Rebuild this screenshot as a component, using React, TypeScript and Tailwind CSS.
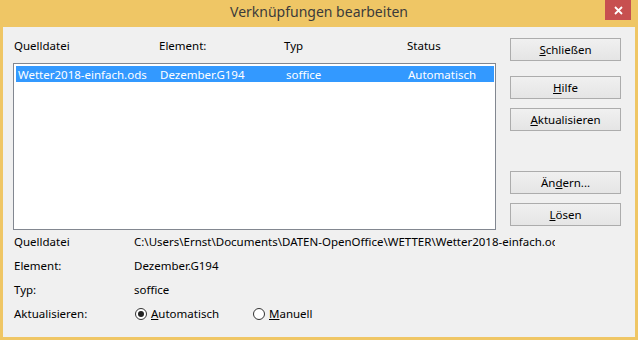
import React from 'react';

const font = { fontFamily: '"Noto Sans", "Open Sans", sans-serif' };

interface BtnProps {
    children: React.ReactNode;
    className?: string;
}

// Win8-style push button
const Btn: React.FC<BtnProps> = ({ children, className = '' }) => (
    <div className={`h-[23px] w-[111px] border border-[#acacac] bg-gradient-to-b from-[#f0f0f0] to-[#e5e5e5] flex items-center justify-center text-[11.5px] text-black ${className}`}>
        {children}
    </div>
);

const Radio: React.FC<{ checked?: boolean }> = ({ checked }) => (
    <span className="w-[12px] h-[12px] rounded-full border border-[#333] bg-white flex items-center justify-center shrink-0">
        {checked && <span className="w-[6px] h-[6px] rounded-full bg-[#222]" />}
    </span>
);

const App: React.FC = () => {
    return (
        <div className="w-[638px] h-[340px] bg-[#efc665] flex flex-col overflow-hidden" style={font}>
            {/* Title bar */}
            <div className="h-[27px] relative flex items-center justify-center shrink-0">
                <span className="text-[14px] text-[#3b3b3b] -mt-[4px]">Verknüpfungen bearbeiten</span>
                <div className="absolute right-[7px] top-0 w-[26px] h-[20px] bg-[#c75050] flex items-center justify-center">
                    <svg width="9" height="9" viewBox="0 0 9 9">
                        <path d="M1 1 L8 8 M8 1 L1 8" stroke="white" strokeWidth="1.8" />
                    </svg>
                </div>
            </div>

            {/* Body */}
            <div className="flex-1 mx-[3px] mb-[3px] bg-[#f0f0f0] flex flex-col text-[11.5px] text-black">
                <div className="flex">
                    {/* List area */}
                    <div className="ml-[10px] w-[483px] flex flex-col">
                        <div className="mt-[10px] h-[16px] grid grid-cols-[145px_125px_123px_1fr] pl-[1px] items-center">
                            <span>Quelldatei</span>
                            <span>Element:</span>
                            <span>Typ</span>
                            <span>Status</span>
                        </div>
                        <div className="mt-[10px] h-[167px] border border-[#828790] bg-white p-[2px] pr-[1px]">
                            <div className="h-[16px] bg-[#3399ff] text-white grid grid-cols-[142px_126px_122px_1fr] pl-[2px] items-center whitespace-nowrap">
                                <span>Wetter2018-einfach.ods</span>
                                <span>Dezember.G194</span>
                                <span>soffice</span>
                                <span>Automatisch</span>
                            </div>
                        </div>
                    </div>

                    {/* Buttons */}
                    <div className="ml-[14px] flex flex-col">
                        <Btn className="mt-[11px]"><span><u>S</u>chließen</span></Btn>
                        <Btn className="mt-[15px]"><span><u>H</u>ilfe</span></Btn>
                        <Btn className="mt-[9px]"><span><u>A</u>ktualisieren</span></Btn>
                        <Btn className="mt-[40px]"><span>Än<u>d</u>ern...</span></Btn>
                        <Btn className="mt-[9px]"><span><u>L</u>ösen</span></Btn>
                    </div>
                </div>

                {/* Details */}
                <div className="ml-[11px] flex flex-col">
                    <div className="h-[24px] flex items-center">
                        <span className="w-[120px]">Quelldatei</span>
                        <span className="w-[421px] overflow-hidden whitespace-nowrap">C:\Users\Ernst\Documents\DATEN-OpenOffice\WETTER\Wetter2018-einfach.ods</span>
                    </div>
                    <div className="h-[24px] flex items-center">
                        <span className="w-[120px]">Element:</span>
                        <span>Dezember.G194</span>
                    </div>
                    <div className="h-[24px] flex items-center">
                        <span className="w-[120px]">Typ:</span>
                        <span>soffice</span>
                    </div>
                    <div className="h-[24px] flex items-center">
                        <span className="w-[121px]">Aktualisieren:</span>
                        <div className="flex items-center w-[118px]">
                            <Radio checked />
                            <span className="ml-[4px]"><u>A</u>utomatisch</span>
                        </div>
                        <div className="flex items-center">
                            <Radio />
                            <span className="ml-[4px]"><u>M</u>anuell</span>
                        </div>
                    </div>
                </div>
            </div>
        </div>
    );
};

export default App;
